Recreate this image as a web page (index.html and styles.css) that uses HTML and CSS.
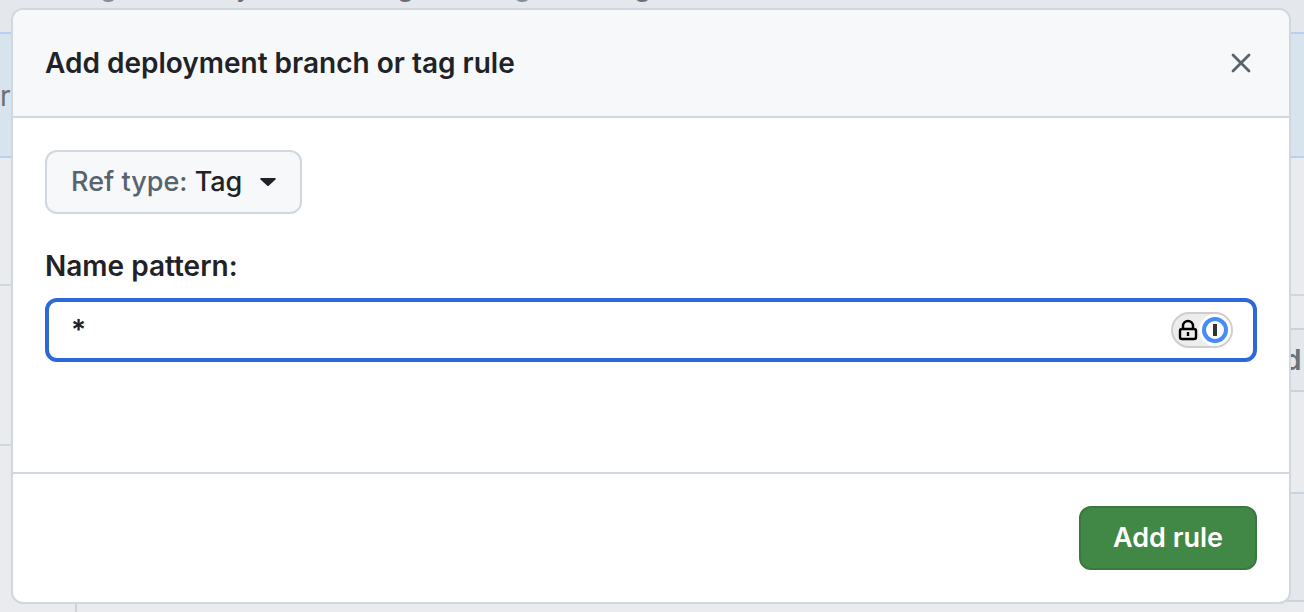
FILE: index.html
```html
<!DOCTYPE html>
<html lang="en">
<head>
<meta charset="utf-8">
<meta name="viewport" content="width=device-width, initial-scale=1">
<title>Add deployment branch or tag rule</title>
<link rel="stylesheet" href="styles.css">
</head>
<body>
<div class="page" aria-hidden="true">
  <div class="page-intro"><span class="soft">g</span><span>y</span><span>g</span><span class="soft">g</span><span>g</span></div>
  <div class="page-banner">ra</div>
  <div class="page-columns">
    <div class="page-side"><div class="side-row side-first"></div><div class="side-row side-second"></div><div class="side-rail"></div></div>
    <div class="page-main"><div class="main-gap"></div><div class="main-strip"></div><div class="main-item">d</div><div class="main-space"></div><div class="main-block"></div></div>
  </div>
</div>
<main class="overlay">
  <form class="dialog" role="dialog" aria-labelledby="dialog-title">
    <header class="dialog-header">
      <h1 id="dialog-title">Add deployment branch or tag rule</h1>
      <button class="close" type="button" aria-label="Close">
        <svg viewBox="0 0 20 20" width="20" height="20"><path d="M2 2 18 18M18 2 2 18" fill="none" stroke="currentColor" stroke-width="2.8" stroke-linecap="round"/></svg>
      </button>
    </header>
    <div class="dialog-body">
      <button class="ref-type" type="button" aria-haspopup="true"><span><span class="muted">Ref type:</span> Tag</span>
        <svg viewBox="0 0 16 8" width="16" height="8"><path d="M1.2 0h13.6c.9 0 1.3 1 .7 1.6L8.700 7.700a1 1 0 0 1-1.400 0L.5 1.600C-.1 1 .3 0 1.200 0Z" fill="currentColor"/></svg>
      </button>
      <label class="label" for="pattern">Name pattern:</label>
      <div class="field">
        <input id="pattern" type="text" value="*">
        <button class="vault" type="button" aria-label="Password manager">
          <svg viewBox="0 0 62 36" width="62" height="36">
            <rect x="1" y="1" width="60" height="34" rx="17" fill="#ededed" stroke="#cecece" stroke-width="2"/>
            <circle cx="44" cy="18" r="16" fill="#fff"/>
            <circle cx="44" cy="18" r="11" fill="#fff" stroke="#458cf7" stroke-width="4"/>
            <rect x="42" y="12" width="4" height="12" fill="#333"/>
            <path d="M12 17v-3a5 5 0 0 1 10 0v3" fill="none" stroke="#000" stroke-width="2.4"/>
            <rect x="9" y="17" width="16" height="10" rx="2" fill="none" stroke="#000" stroke-width="2.4"/>
            <path d="M17 20v4" stroke="#000" stroke-width="2.4"/>
          </svg>
        </button>
      </div>
    </div>
    <footer class="dialog-footer"><button class="submit" type="submit">Add rule</button></footer>
  </form>
</main>
</body>
</html>
```
FILE: styles.css
```css
* { box-sizing: border-box; }
body {
  margin: 0;
  min-height: 100vh;
  overflow: hidden;
  background: #e9ebef;
  color: #1f2328;
  font: 28px/40px Inter, "Liberation Sans", sans-serif;
}
button, input { font: inherit; color: inherit; margin: 0; }
h1 { margin: 0; font-size: 28px; font-weight: 600; line-height: 40px; }

/* Page behind the dialog */
.page { position: absolute; inset: 0; display: flex; flex-direction: column; overflow: hidden; color: #6b7077; }
.page-intro { display: grid; grid-template-columns: 136px 161px 117px 120px auto; align-content: end; height: 32px; padding: 0 0 26px 100px; background: #e4e7ec; }
.soft { color: #878e98; }
.page-banner { height: 126px; padding-top: 42px; border: solid #b6d2f0; border-width: 2px 0; background: #d8e4ed; }
.page-columns { display: flex; flex: 1; justify-content: space-between; }
.page-side { display: flex; flex-direction: column; width: 77px; }
.side-row { border-bottom: 2px solid #d0d7de; }
.side-first { height: 128px; }
.side-second { height: 160px; }
.side-rail { flex: 1; border-right: 2px solid #ccd3db; }
.page-main { display: flex; flex-direction: column; width: 20px; }
.main-gap { height: 138px; border-bottom: 2px solid #d0d7de; }
.main-strip { height: 32px; }
.main-item { height: 64px; padding-top: 10px; border: solid #ccd3db; border-width: 2px 0; background: #e4e7ec; font-weight: 600; }
.main-space { height: 100px; }
.main-block { height: 110px; border: solid #ccd3db; border-width: 2px 0; background: #e4e7ec; }

/* Dialog */
.overlay { position: relative; display: flex; min-height: 100vh; padding: 8px 13px 8px 11px; }
.dialog { display: flex; flex: 1; flex-direction: column; overflow: hidden; border: 2px solid #d0d7de; border-radius: 12px; background: #fff; }
.dialog-header { display: flex; align-items: center; justify-content: space-between; padding: 33px 32px; border-bottom: 2px solid #d0d7de; background: #f6f8fa; }
.close { display: flex; align-items: center; justify-content: center; width: 32px; height: 40px; padding: 0; border: 0; background: none; color: #59636e; }
.dialog-body { display: flex; flex: 1; flex-direction: column; align-items: flex-start; padding: 32px 32px 108px; }
.ref-type { display: flex; align-items: center; gap: 18px; height: 64px; padding: 0 24px; border: 2px solid #d0d7de; border-radius: 12px; background: #f6f8fa; font-size: 27px; font-weight: 500; white-space: nowrap; }
.muted { color: #59636e; }
.label { margin: 32px 0 12px; font-weight: 600; }
.field { position: relative; width: 100%; }
.field input { display: block; width: 100%; height: 64px; padding: 0 80px 0 22px; border: 4px solid #2d67d8; border-radius: 12px; outline: 0; background: #fff; font-weight: 600; }
.vault { position: absolute; top: 14px; right: 24px; display: flex; padding: 0; border: 0; background: none; }
.dialog-footer { display: flex; justify-content: flex-end; padding: 32px; border-top: 2px solid #d0d7de; }
.submit { height: 64px; padding: 0 32px; border: 2px solid #3b783f; border-radius: 12px; background: #418745; color: #fff; font-size: 27px; font-weight: 600; }
```
